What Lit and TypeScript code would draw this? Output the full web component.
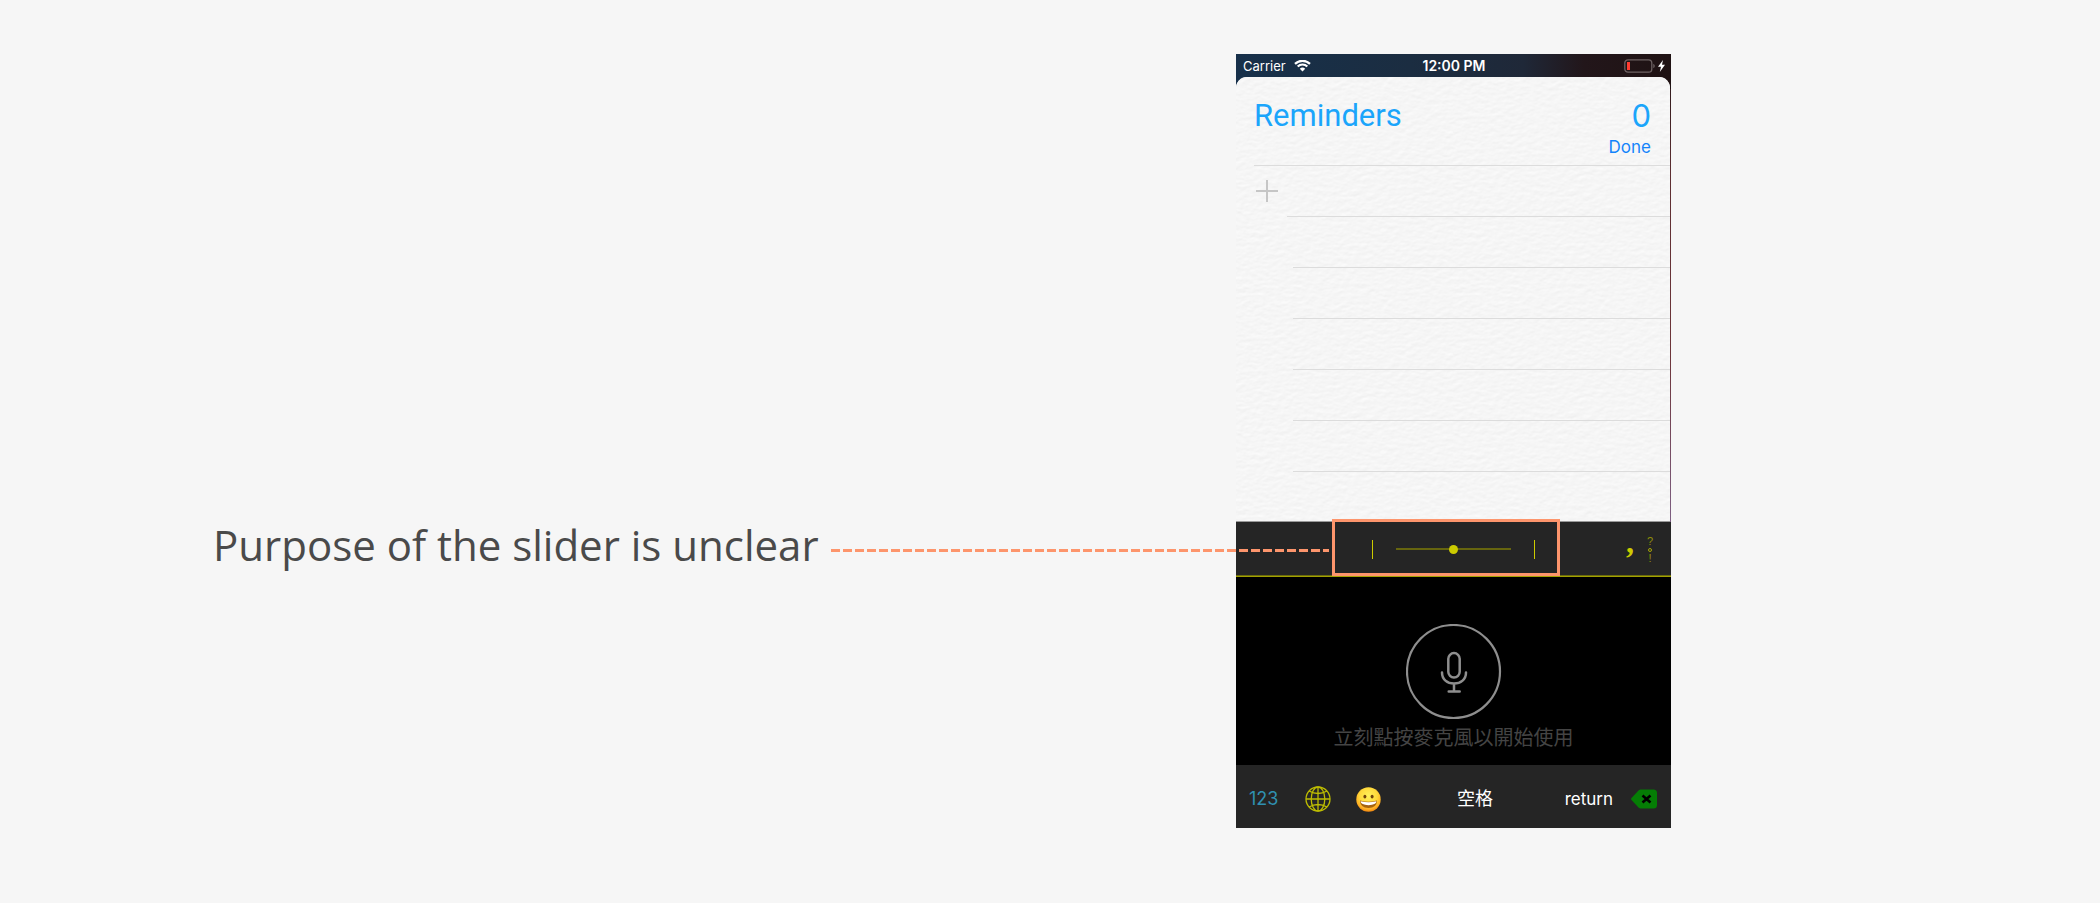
import { LitElement, html, css } from "lit";
import { customElement, state } from "lit/decorators.js";

@customElement("reminders-screen")
class RemindersScreen extends LitElement {
  static styles = css`
    :host {
      display: block;
      font-family: Inter, "Liberation Sans", sans-serif;
      background: linear-gradient(to bottom, #221416 0, #5e2f32 120px, #6e353a 300px, #7d5f82 468px);
    }
    .status {
      display: grid;
      grid-template-columns: 1fr auto 1fr;
      align-items: center;
      height: 24px;
      padding: 0 6px 0 7px;
      color: #fff;
      font-size: 13px;
      line-height: 24px;
    }
    .top {
      height: 35px;
      background: linear-gradient(to right, #17304a, #1b2d41 40%, #1f2838 66%, #22161a 80%, #1f1213);
    }
    .carrier, .power {
      display: flex;
      align-items: center;
      gap: 8px;
    }
    .power { justify-content: flex-end; gap: 3px; }
    .time { font-size: 14px; font-weight: 600; }
    .paper {
      margin: -12px 1px 0 0;
      border-radius: 11px 11px 0 0;
      border-bottom: 1px solid #9a9a9a;
      background-color: #f6f6f6;
      background-image: url("data:image/svg+xml,%3Csvg xmlns='http://www.w3.org/2000/svg' width='217' height='222'%3E%3Cfilter id='p' x='0' y='0' width='100%25' height='100%25' color-interpolation-filters='sRGB'%3E%3CfeTurbulence type='fractalNoise' baseFrequency='.14 .24' numOctaves='3' seed='4' stitchTiles='stitch'/%3E%3CfeDiffuseLighting lighting-color='%23ffffff' surfaceScale='.09' diffuseConstant='1.112'%3E%3CfeDistantLight azimuth='250' elevation='60'/%3E%3C/feDiffuseLighting%3E%3C/filter%3E%3Crect width='217' height='222' filter='url(%23p)'/%3E%3C/svg%3E");
    }
    .head {
      display: grid;
      grid-template-columns: 1fr auto;
      margin-left: 18px;
      padding: 19px 19px 6px 0;
      border-bottom: 1px solid #dcdcdc;
      color: #1ba5fb;
    }
    h1, .count {
      margin: 0;
      font-size: 31px;
      line-height: 39px;
      font-weight: 400;
      font-family: Roboto, sans-serif;
    }
    .count { text-align: right; font-family: Inter, sans-serif; }
    button {
      border: 0;
      padding: 0;
      background: none;
      font: inherit;
      color: inherit;
      cursor: pointer;
    }
    .done {
      grid-column: 2;
      color: #1484fb;
      font-size: 17px;
      line-height: 24px;
    }
    .rows { list-style: none; margin: 0; padding: 0; }
    .row {
      height: 50px;
      margin-left: 57px;
      border-bottom: 1px solid #dcdcdc;
    }
    .add { display: flex; align-items: center; margin-left: 51px; }
    .add button { margin-left: -31px; height: 22px; }
    .row:last-child { height: 49px; border: 0; }
    svg { display: block; }
  `;

  render() {
    return html`
      <div class="top">
        <div class="status">
          <span class="carrier">Carrier
            <svg width="17" height="12" viewBox="0 0 17 12" fill="#fff" aria-hidden="true">
              <path d="M8.500 11.600 L11.200 8.800 A3.800 3.800 0 0 0 5.800 8.800 Z" />
              <path d="M3.700 6.500 A6.800 6.800 0 0 1 13.300 6.500" fill="none" stroke="#fff" stroke-width="2.200" />
              <path d="M1 3.900 A10.600 10.600 0 0 1 16 3.900" fill="none" stroke="#fff" stroke-width="2.200" />
            </svg>
          </span>
          <span class="time">12:00 PM</span>
          <span class="power">
            <svg width="31" height="14" viewBox="0 0 31 14" aria-hidden="true">
              <rect x=".8" y=".8" width="27" height="12.400" rx="3.200" fill="none" stroke="#6d6263" stroke-width="1.300" />
              <path d="M29.300 4.800 v4.400 q1.500 -.8 1.500 -2.200 t-1.500 -2.200z" fill="#6d6263" />
              <rect x="3" y="3" width="3" height="8" fill="#ff3b30" />
            </svg>
            <svg width="7" height="12" viewBox="0 0 7 12" aria-hidden="true">
              <path d="M5 0 L0 6.800 H3 L1.800 12 L7 4.800 H4 Z" fill="#fff" />
            </svg>
          </span>
        </div>
      </div>
      <section class="paper">
        <header class="head">
          <h1>Reminders</h1>
          <span class="count">0</span>
          <button class="done">Done</button>
        </header>
        <ul class="rows">
          <li class="row add">
            <button aria-label="Add reminder">
              <svg width="22" height="22" viewBox="0 0 22 22" stroke="#c6c6c6" stroke-width="2">
                <path d="M11 0 V22 M0 11 H22" />
              </svg>
            </button>
          </li>
          ${[1, 2, 3, 4, 5, 6].map(() => html`<li class="row"></li>`)}
        </ul>
      </section>
    `;
  }
}

@customElement("keyboard-bar")
class KeyboardBar extends LitElement {
  @state() private position = 50;

  static styles = css`
    :host {
      display: grid;
      grid-template-columns: 1fr auto 1fr;
      align-items: center;
      position: relative;
      height: 54px;
      background: #252525;
      border-bottom: 1px solid #a3a200;
      box-shadow: inset 0 -1px #6b6b10;
      color: #cccb00;
    }
    .caret {
      grid-column: 2;
      display: flex;
      align-items: center;
      gap: 23px;
    }
    .tick { width: 1px; height: 19px; background: #cccb00; }
    input {
      appearance: none;
      width: 115px;
      height: 9px;
      margin: 0;
      background: linear-gradient(#66650f, #66650f) center / 100% 2px no-repeat;
    }
    input::-webkit-slider-thumb {
      appearance: none;
      width: 9px;
      height: 9px;
      border-radius: 50%;
      background: #cccb00;
    }
    .highlight {
      position: absolute;
      left: 96px;
      top: -3px;
      box-sizing: border-box;
      width: 228px;
      height: 57px;
      border: 3px solid #fd956c;
      pointer-events: none;
    }
    .marks {
      display: flex;
      justify-content: flex-end;
      align-items: center;
      gap: 13px;
      padding-right: 18px;
    }
    button { border: 0; padding: 0; background: none; color: inherit; }
    .comma {
      height: 28px;
      padding-bottom: 16px;
      font: bold 32px/14px "Liberation Serif", serif;
    }
    .more {
      display: grid;
      justify-items: center;
      gap: 2px;
      padding-top: 2px;
      color: #8f8e08;
      font: 11px/9px "Liberation Sans", sans-serif;
    }
    .ring {
      width: 2px;
      height: 2px;
      border: 1px solid #a5a406;
      border-radius: 50%;
    }
  `;

  render() {
    return html`
      <div class="caret">
        <span class="tick"></span>
        <input
          type="range"
          aria-label="Cursor position"
          .value=${String(this.position)}
          @input=${(e: Event) => (this.position = Number((e.target as HTMLInputElement).value))}
        />
        <span class="tick"></span>
      </div>
      <div class="marks">
        <button class="comma">,</button>
        <button class="more" aria-label="More punctuation">
          <span>?</span><span class="ring"></span><span>!</span>
        </button>
      </div>
      <div class="highlight"></div>
    `;
  }
}

@customElement("voice-keyboard")
class VoiceKeyboard extends LitElement {
  static styles = css`
    :host {
      display: block;
      font-family: Inter, "Noto Sans CJK TC", sans-serif;
      background: #000;
    }
    button {
      border: 0;
      padding: 0;
      background: none;
      color: inherit;
      font: inherit;
      cursor: pointer;
    }
    svg { display: block; }
    .listen {
      display: grid;
      justify-items: center;
      padding: 47px 0 13px;
    }
    .mic { height: 96px; }
    .hint {
      margin: 2px 0 0;
      color: #444;
      font: 20px/30px "Noto Sans CJK TC", sans-serif;
    }
    .keys {
      display: flex;
      align-items: center;
      height: 58px;
      padding: 5px 14px 0 13px;
      background: #252525;
      color: #fff;
      font-size: 18px;
      line-height: 24px;
    }
    .left, .right { display: flex; align-items: center; }
    .left { gap: 25px; }
    .right { gap: 18px; font-size: 17px; }
    .num { padding-right: 2px; color: #3090b0; }
    .space { flex: 1; padding-left: 4px; }
  `;

  render() {
    return html`
      <div class="listen">
        <button class="mic" aria-label="麥克風">
          <svg width="96" height="96" viewBox="0 0 96 96" fill="none" stroke="#8e8e8e" stroke-width="2" stroke-linecap="round">
            <circle cx="47.500" cy="47.500" r="46.500" stroke-width="2.200" />
            <rect x="42.300" y="29.100" width="11.400" height="24.400" rx="5.700" stroke-width="2.500" />
            <path d="M36 48.500 C36 55.500 41.200 59.500 48 59.500 S60 55.500 60 48.500 M48 59.500 V67.500 M42.700 67.500 H53.700" stroke-width="2.500" />
          </svg>
        </button>
        <p class="hint">立刻點按麥克風以開始使用</p>
      </div>
      <div class="keys">
        <div class="left">
          <button class="num">123</button>
          <button aria-label="Next keyboard">
            <svg width="26" height="26" viewBox="0 0 26 26" fill="none" stroke="#bdbc02" stroke-width="1.300">
              <circle cx="13" cy="13" r="12" />
              <ellipse cx="13" cy="13" rx="6.800" ry="12" />
              <path d="M13 1 V25 M1 13 H25 M4 5 Q13 10 22 5 M4 21 Q13 16 22 21" />
            </svg>
          </button>
          <button aria-label="Emoji">
            <svg width="25" height="25" viewBox="0 0 25 25">
              <defs>
                <radialGradient id="face" cx=".5" cy=".35" r=".65">
                  <stop offset="0" stop-color="#fff05a" />
                  <stop offset=".55" stop-color="#ffd83a" />
                  <stop offset=".85" stop-color="#fdad22" />
                  <stop offset="1" stop-color="#ee8511" />
                </radialGradient>
              </defs>
              <circle cx="12.500" cy="12.500" r="12.200" fill="url(#face)" />
              <ellipse cx="8.900" cy="9.600" rx="1.500" ry="1.900" fill="#70420b" />
              <ellipse cx="16.100" cy="9.600" rx="1.500" ry="1.900" fill="#70420b" />
              <path d="M4 13.600 Q12.500 16 21 13.600 Q20.800 21 12.500 21 T4 13.600Z" fill="#a5620e" />
              <path d="M4.600 14.300 Q12.500 16.300 20.400 14.300 Q20.200 18 12.500 18.200 Q4.800 18 4.600 14.300Z" fill="#fff" />
            </svg>
          </button>
        </div>
        <button class="space">空格</button>
        <div class="right">
          <button>return</button>
          <button aria-label="Delete">
            <svg width="26" height="20" viewBox="0 0 26 20">
              <path d="M9.500 .5 H22.500 Q26 .5 26 4 V16 Q26 19.500 22.500 19.500 H9.500 Q8.500 19.500 7.500 18.500 L.5 11 Q-.3 10 .5 9 L7.500 1.500 Q8.500 .5 9.500 .5Z" fill="#057d05" />
              <path d="M11.500 6.500 L19.500 13.500 M19.500 6.500 L11.500 13.500" stroke="#000" stroke-width="2.600" />
            </svg>
          </button>
        </div>
      </div>
    `;
  }
}

@customElement("app-root")
class AppRoot extends LitElement {
  static styles = css`
    :host {
      display: grid;
      grid-template-columns: minmax(0, 1fr) 435px;
      align-content: start;
      box-sizing: border-box;
      min-height: 100vh;
      padding: 54px 429px 54px 213px;
      background: #f6f6f6;
    }
    reminders-screen, voice-keyboard { grid-column: 2; }
    keyboard-bar { grid-column: 2; grid-row: 2; }
    .note {
      grid-column: 1;
      grid-row: 2;
      display: flex;
      align-items: center;
      gap: 12px;
      z-index: 1;
      height: 57px;
      margin: 0 -93px -2px 0;
    }
    .text {
      margin: 0;
      padding-bottom: 12px;
      color: #4a4a4a;
      font: 42px/44px "Open Sans", sans-serif;
      white-space: nowrap;
    }
    .leader {
      flex: 1;
      height: 3px;
      background: repeating-linear-gradient(to right, #fd956c 0 9px, transparent 9px 12px);
    }
  `;

  render() {
    return html`
      <reminders-screen></reminders-screen>
      <div class="note">
        <p class="text">Purpose of the slider is unclear</p>
        <span class="leader"></span>
      </div>
      <keyboard-bar></keyboard-bar>
      <voice-keyboard></voice-keyboard>
    `;
  }
}
